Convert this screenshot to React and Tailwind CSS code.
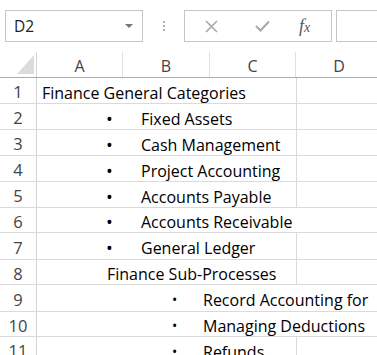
import React from 'react';

const FONT = { fontFamily: '"Open Sans", "Liberation Sans", sans-serif' };

// level: 0 = heading in A, 1 = first bullet, 2 = heading indented, 3 = sub bullet
const ROWS = [
  { n: 1, h: 26, level: 0, text: 'Finance General Categories', dLine: true },
  { n: 2, h: 26, level: 1, text: 'Fixed Assets', dLine: true },
  { n: 3, h: 26, level: 1, text: 'Cash Management', dLine: true },
  { n: 4, h: 26, level: 1, text: 'Project Accounting', dLine: true },
  { n: 5, h: 26, level: 1, text: 'Accounts Payable', dLine: true },
  { n: 6, h: 25, level: 1, text: 'Accounts Receivable', dLine: false },
  { n: 7, h: 27, level: 1, text: 'General Ledger', dLine: true },
  { n: 8, h: 25, level: 2, text: 'Finance Sub-Processes', dLine: true },
  { n: 9, h: 27, level: 3, text: 'Record Accounting for', dLine: false },
  { n: 10, h: 25, level: 3, text: 'Managing Deductions', dLine: false },
  { n: 11, h: 26, level: 3, text: 'Refunds', dLine: true },
];

function CellText({ row }) {
  if (row.level === 0) return <span className="pl-[5px]">{row.text}</span>;
  if (row.level === 2) return <span className="pl-[70px]">{row.text}</span>;
  if (row.level === 1)
    return (
      <>
        <span className="pl-[69px] w-[104px] shrink-0 text-[18px] leading-none">•</span>
        <span>{row.text}</span>
      </>
    );
  return (
    <>
      <span className="pl-[135px] w-[166px] shrink-0 text-[14px] leading-none">•</span>
      <span>{row.text}</span>
    </>
  );
}

function Toolbar() {
  return (
    <div className="h-[52px] flex items-start pt-[10px]">
      <div className="ml-[5px] w-[138px] h-[32px] border border-[#c6c6c6] flex items-center justify-between pl-[8px] pr-[9px]">
        <span className="text-[15.5px] text-[#222] pt-[1px]">D2</span>
        <svg width="8" height="5" viewBox="0 0 8 5"><path d="M0 0h8L4 4z" fill="#777" /></svg>
      </div>
      <div className="w-[41px] h-[32px] flex flex-col items-center justify-center gap-[2px]">
        <span className="w-[2px] h-[2px] bg-[#b5b5b5]" />
        <span className="w-[2px] h-[2px] bg-[#b5b5b5]" />
        <span className="w-[2px] h-[2px] bg-[#b5b5b5]" />
      </div>
      <div className="w-[148px] h-[32px] border border-[#c6c6c6] flex items-center">
        <svg className="ml-[20px]" width="13" height="13" viewBox="0 0 13 13">
          <path d="M1 1l11 11M12 1L1 12" stroke="#a8a8a8" strokeWidth="1.6" />
        </svg>
        <svg className="ml-[37px]" width="15" height="12" viewBox="0 0 15 12">
          <path d="M1 6l4.5 4.5L14 1.5" stroke="#a8a8a8" strokeWidth="2" fill="none" />
        </svg>
        <span
          className="ml-[29px] text-[18px] italic text-[#5a5a5a] leading-none"
          style={{ fontFamily: '"Liberation Serif", serif' }}
        >
          f<span className="text-[14px]">x</span>
        </span>
      </div>
      <div className="ml-[4px] flex-1 h-[32px] border border-r-0 border-[#c6c6c6]" />
    </div>
  );
}

export default function App() {
  return (
    <div className="w-[377px] h-[355px] bg-white overflow-hidden text-[#000]" style={FONT}>
      <Toolbar />
      {/* column headers */}
      <div className="flex h-[26px] border-b border-[#ababab] text-[16px] text-[#444]">
        <div className="w-[37px] shrink-0 border-r border-[#d4d4d4] relative">
          <svg className="absolute left-[17px] top-[3px]" width="17" height="19" viewBox="0 0 17 19">
            <path d="M17 0V19H0z" fill="#dcdcdc" />
          </svg>
        </div>
        <div className="w-[86px] shrink-0 border-r border-[#e1e1e1] flex items-center justify-center pt-[3px]">A</div>
        <div className="w-[87px] shrink-0 border-r border-[#e1e1e1] flex items-center justify-center pt-[3px]">B</div>
        <div className="w-[86px] shrink-0 border-r border-[#e1e1e1] flex items-center justify-center pt-[3px]">C</div>
        <div className="w-[86px] shrink-0 flex items-center justify-center pt-[3px]">D</div>
      </div>
      {ROWS.map((row) => (
        <div key={row.n} className="flex border-b border-[#dadada] text-[16px]" style={{ height: row.h }}>
          <div className="w-[37px] shrink-0 border-r border-[#d4d4d4] flex items-center justify-center text-[16.5px] text-[#444] pt-[4px]">
            {row.n}
          </div>
          <div className="w-[259px] shrink-0 flex items-center whitespace-nowrap overflow-visible relative z-10 pt-[4px]">
            <CellText row={row} />
          </div>
          <div className={`flex-1 ${row.dLine ? 'border-l border-[#dadada]' : ''}`} />
        </div>
      ))}
    </div>
  );
}
